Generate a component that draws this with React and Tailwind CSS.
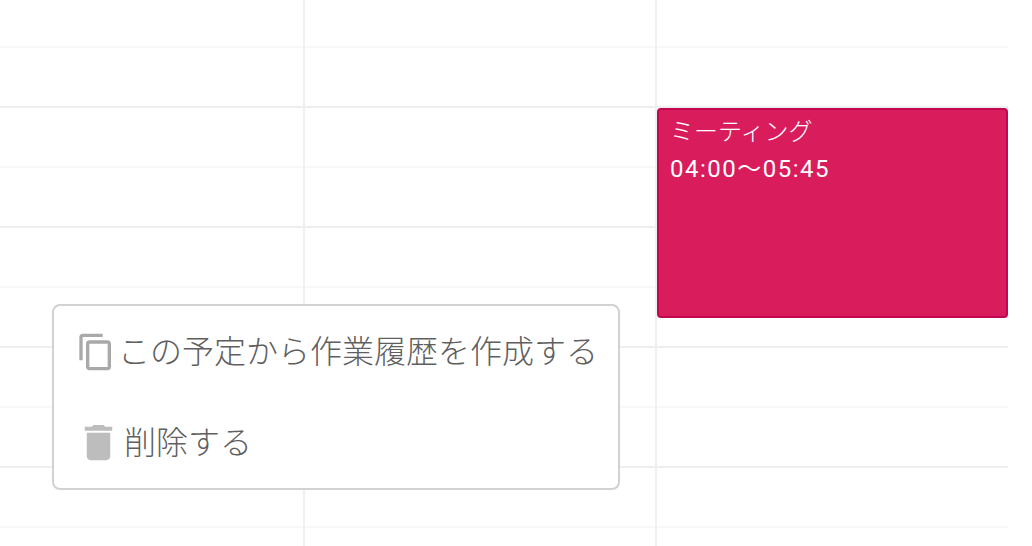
const FONT = "font-['Liberation_Sans','Noto_Sans_CJK_JP',sans-serif]"
const slots = [false, true, false, true, false, true, false, true, false]

function Column({ className }) {
  return (
    <div className={`flex flex-col border-[#f0f0f0] ${className}`}>
      {slots.map((strong, i) => (
        <div
          key={i}
          className={`shrink-0 border-b-2 ${i === 0 ? 'h-[48px]' : 'h-[60px]'} ${strong ? 'border-[#eeeeee]' : 'border-[#f8f8f8]'}`}
        ></div>
      ))}
    </div>
  )
}

export default function App() {
  return (
    <div className={`relative h-[546px] w-[1032px] overflow-hidden bg-white ${FONT}`}>
      {/* Calendar grid */}
      <div className="flex h-full w-[1008px]">
        <Column className="w-[305px] border-r-2" />
        <Column className="w-[352px] border-r-2" />
        <Column className="flex-1" />
      </div>

      {/* Event */}
      <div className="absolute left-[657px] top-[108px] h-[210px] w-[351px] rounded-[4px] border-2 border-[#c2064f] bg-[#d91c5c] px-[11px] py-[6px] text-white">
        <div className="text-[24px] font-light leading-[32px]">ミーティング</div>
        <div className="mt-[5px] font-['Roboto','Noto_Sans_CJK_JP',sans-serif] text-[24px] font-normal leading-[32px] tracking-[1.5px]">04:00〜05:45</div>
      </div>

      {/* Context menu */}
      <div className="absolute left-[52px] top-[304px] flex h-[186px] w-[568px] flex-col rounded-[8px] border-2 border-[#d2d2d2] bg-white text-[#5f5f5f]">
        <div className="flex h-[92px] items-center pl-[22px]">
          <svg viewBox="0 0 24 24" className="h-[40px] w-[40px] shrink-0 fill-[#a9a9a9]">
            <path d="M16 1H4c-1.100 0-2 .9-2 2v14h2V3h12V1zm3 4H8c-1.100 0-2 .9-2 2v14c0 1.100.9 2 2 2h11c1.100 0 2-.9 2-2V7c0-1.100-.9-2-2-2zm0 16H8V7h11v14z" />
          </svg>
          <span className="ml-[2px] whitespace-nowrap text-[32px] font-light leading-[40px]">この予定から作業履歴を作成する</span>
        </div>
        <div className="flex h-[92px] items-center pl-[21px]">
          <svg viewBox="0 0 24 24" className="h-[47px] w-[47px] shrink-0 fill-[#bdbdbd]">
            <path d="M6 19c0 1.100.9 2 2 2h8c1.100 0 2-.9 2-2V7H6v12zM19 4h-3.500l-1-1h-5l-1 1H5v2h14V4z" />
          </svg>
          <span className="ml-[2px] whitespace-nowrap text-[32px] font-light leading-[40px]">削除する</span>
        </div>
      </div>
    </div>
  )
}
